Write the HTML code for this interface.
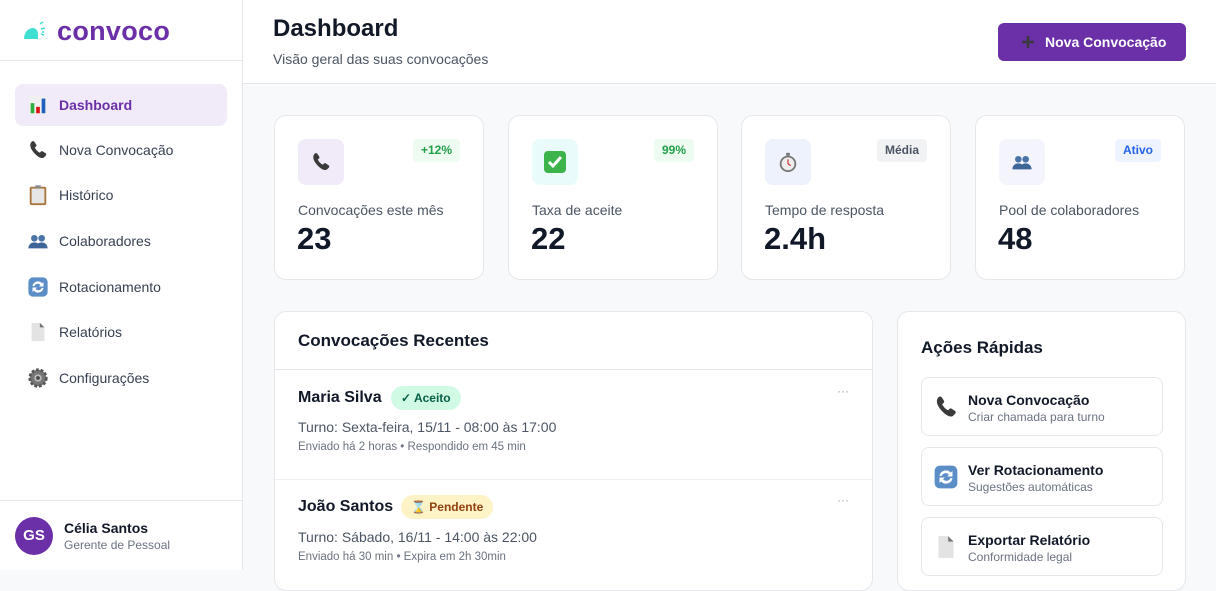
<!DOCTYPE html>
<html><head><meta charset="utf-8"><style>
*{box-sizing:border-box;margin:0;padding:0}
body{width:1216px;height:570px;overflow:hidden;font-family:"Liberation Sans",sans-serif;background:#f8f9fb;color:#111827;position:relative}
.abs{position:absolute}
.side{left:0;top:0;width:243px;height:570px;background:#fff;border-right:1px solid #e5e7eb}
.nav{position:absolute;left:15px;width:212px;height:42px;border-radius:8px;display:flex;align-items:center;padding-left:12px;font-size:14px;color:#374151}
.nav svg{width:22px;height:22px;margin-right:10px}
.nav.act{background:#f1eaf8;color:#6b2fa8;font-weight:bold}
.card{background:#fff;border:1px solid #e5e7eb;border-radius:12px;position:absolute}
.ic{position:absolute;left:23px;top:23px;width:46px;height:46px;border-radius:8px;display:flex;align-items:center;justify-content:center}
.badge{position:absolute;top:23px;right:23px;height:23px;padding:0 8px;border-radius:4px;font-size:12px;font-weight:bold;line-height:23px}
.lbl{position:absolute;left:23px;top:86px;font-size:14px;color:#4b5563}
.num{position:absolute;left:22px;top:105px;font-size:31px;font-weight:bold;color:#111827}
.qa{position:absolute;left:23px;width:242px;height:59px;border:1px solid #e5e7eb;border-radius:8px}
.qa svg{position:absolute;left:11px;top:16px;width:26px;height:26px}
.qa b{position:absolute;left:46px;top:14px;font-size:14px;color:#111827}
.qa span{position:absolute;left:46px;top:32px;font-size:12px;color:#6b7280}
</style></head><body>
<svg width="0" height="0" style="position:absolute"><defs>
<symbol id="phone" viewBox="0 0 24 24"><path d="M5 3c1-1 2-1 3 0l2 3c.6 1 .3 1.8-.5 2.5l-1 .8c1 2.5 3 4.5 5.5 5.7l.9-1c.7-.8 1.5-1 2.4-.4l3 2c1 .8 1 1.8 0 2.8l-1.3 1.3C17 22 13 20.5 9 16.5S2.5 8 4 4.5z" fill="#3a3a3a"/></symbol>
<symbol id="people" viewBox="0 0 24 24"><circle cx="8" cy="9" r="3.6" fill="#4a74a8"/><circle cx="16" cy="9" r="3.6" fill="#4a74a8"/><path d="M1.5 20c0-4 3-6.5 6.5-6.5s6.5 2.5 6.5 6.5z M9.5 20c0-4 3-6.5 6.5-6.5s6.5 2.5 6.5 6.5z" fill="#3d6598"/></symbol>
<symbol id="rot" viewBox="0 0 24 24"><rect x="1.5" y="1.5" width="21" height="21" rx="5" fill="#5b8ec7"/><path d="M6 11a6 6 0 0 1 10.5-3l1.5-1.5v5h-5l1.7-1.7A4 4 0 0 0 8 11z M18 13a6 6 0 0 1-10.5 3L6 17.5v-5h5l-1.7 1.7A4 4 0 0 0 16 13z" fill="#fff"/></symbol>
<symbol id="doc" viewBox="0 0 24 24"><path d="M5 2h9l5 5v15H5z" fill="#e3e3e3"/><path d="M14 2l5 5h-5z" fill="#777"/></symbol>
</defs></svg>

<div class="abs side">
  <div class="abs" style="left:23px;top:16px;display:flex;align-items:center">
    <svg width="30" height="24" viewBox="0 0 30 24"><path d="M1 19c0-6 4-11 9-11 3 0 5 3 5 6v5z" fill="#3fe0d2"/><path d="M17 4l3-2M18 9l4-1M18 14l3 1M19 12l2 0" stroke="#3fe0d2" stroke-width="1.5"/></svg>
    <span style="font-size:27px;font-weight:bold;color:#6b2fa8;margin-left:4px;letter-spacing:0.3px">convoco</span>
  </div>
  <div class="abs" style="left:0;top:60px;width:242px;border-top:1px solid #e5e7eb"></div>
  <div class="nav act" style="top:84px"><svg viewBox="0 0 24 24"><rect x="2" y="2" width="20" height="20" fill="#f0f0f0"/><rect x="4" y="10" width="4" height="11" fill="#2fae3b"/><rect x="10" y="14" width="4" height="7" fill="#d11"/><rect x="16" y="5" width="4" height="16" fill="#1f5fbf"/></svg>Dashboard</div>
  <div class="nav" style="top:129px"><svg><use href="#phone"/></svg>Nova Convocação</div>
  <div class="nav" style="top:174px"><svg viewBox="0 0 24 24"><rect x="3" y="3" width="18" height="20" rx="2" fill="#a8763e"/><rect x="5" y="5" width="14" height="16" fill="#e6e6e6"/><rect x="9" y="1.5" width="6" height="3" fill="#888"/></svg>Histórico</div>
  <div class="nav" style="top:220px"><svg><use href="#people"/></svg>Colaboradores</div>
  <div class="nav" style="top:266px"><svg><use href="#rot"/></svg>Rotacionamento</div>
  <div class="nav" style="top:311px"><svg><use href="#doc"/></svg>Relatórios</div>
  <div class="nav" style="top:357px"><svg viewBox="0 0 24 24"><circle cx="12" cy="12" r="9" fill="#777" stroke="#555" stroke-width="3" stroke-dasharray="3 2"/><circle cx="12" cy="12" r="4" fill="#bbb"/><circle cx="12" cy="12" r="2" fill="#444"/></svg>Configurações</div>
  <div class="abs" style="left:0;top:500px;width:242px;border-top:1px solid #e5e7eb"></div>
  <div class="abs" style="left:15px;top:517px;width:38px;height:38px;border-radius:50%;background:#6b2fa8;color:#fff;font-weight:bold;font-size:15px;text-align:center;line-height:38px">GS</div>
  <div class="abs" style="left:64px;top:520px;font-size:14px;font-weight:bold">Célia Santos</div>
  <div class="abs" style="left:64px;top:538px;font-size:12px;color:#6b7280">Gerente de Pessoal</div>
</div>

<div class="abs" style="left:243px;top:0;width:973px;height:84px;background:#fff;border-bottom:1px solid #e5e7eb"></div>
<div class="abs" style="left:273px;top:15px;font-size:24px;font-weight:bold">Dashboard</div>
<div class="abs" style="left:273px;top:51px;font-size:14px;color:#4b5563">Visão geral das suas convocações</div>
<div class="abs" style="left:998px;top:23px;width:188px;height:38px;background:#6b2fa8;border-radius:6px;color:#fff;font-weight:bold;font-size:14px;line-height:38px;padding-left:47px"><svg style="position:absolute;left:23px;top:12px" width="14" height="14" viewBox="0 0 14 14"><path d="M7 1v12M1 7h12" stroke="#3a3a3a" stroke-width="2.6"/></svg>Nova Convocação</div>

<div class="card" style="left:274px;top:115px;width:210px;height:165px">
 <div class="ic" style="background:#f1eaf8"><svg width="22" height="22"><use href="#phone"/></svg></div>
 <div class="badge" style="background:#edfbf1;color:#22a04a">+12%</div>
 <div class="lbl">Convocações este mês</div><div class="num">23</div></div>
<div class="card" style="left:508px;top:115px;width:210px;height:165px">
 <div class="ic" style="background:#e9fbfa"><svg width="24" height="24" viewBox="0 0 24 24"><rect x="1" y="1" width="22" height="22" rx="4" fill="#3cb44b"/><path d="M6 12l4 4 8-9" stroke="#fff" stroke-width="3" fill="none"/></svg></div>
 <div class="badge" style="background:#edfbf1;color:#22a04a">99%</div>
 <div class="lbl">Taxa de aceite</div><div class="num">22</div></div>
<div class="card" style="left:741px;top:115px;width:210px;height:165px">
 <div class="ic" style="background:#eef2fd"><svg width="22" height="22" viewBox="0 0 24 24"><circle cx="12" cy="14" r="8" fill="#eee" stroke="#777" stroke-width="2"/><rect x="10" y="2" width="4" height="3" fill="#777"/><path d="M12 14V9M12 14l3 2" stroke="#c33" stroke-width="1.3"/></svg></div>
 <div class="badge" style="background:#f1f2f4;color:#4b5563">Média</div>
 <div class="lbl">Tempo de resposta</div><div class="num">2.4h</div></div>
<div class="card" style="left:975px;top:115px;width:210px;height:165px">
 <div class="ic" style="background:#f4f5fc"><svg width="22" height="22"><use href="#people"/></svg></div>
 <div class="badge" style="background:#eef4ff;color:#2563eb">Ativo</div>
 <div class="lbl">Pool de colaboradores</div><div class="num">48</div></div>

<div class="card" style="left:274px;top:311px;width:599px;height:280px">
 <div class="abs" style="left:23px;top:19px;font-size:17px;font-weight:bold">Convocações Recentes</div>
 <div class="abs" style="left:0;top:57px;width:597px;border-top:1px solid #e5e7eb"></div>
 <div class="abs" style="left:23px;top:77px;font-size:16px;font-weight:bold">Maria Silva</div>
 <div class="abs" style="left:116px;top:74px;height:24px;padding:0 10px;border-radius:12px;background:#d1fae5;color:#065f46;font-size:12px;font-weight:bold;line-height:24px">✓ Aceito</div>
 <div class="abs" style="left:562px;top:72px;color:#9ca3af;font-size:12px">···</div>
 <div class="abs" style="left:23px;top:107px;font-size:14px;color:#4b5563">Turno: Sexta-feira, 15/11 - 08:00 às 17:00</div>
 <div class="abs" style="left:23px;top:129px;font-size:11.5px;color:#6b7280">Enviado há 2 horas • Respondido em 45 min</div>
 <div class="abs" style="left:0;top:167px;width:597px;border-top:1px solid #eef0f2"></div>
 <div class="abs" style="left:23px;top:186px;font-size:16px;font-weight:bold">João Santos</div>
 <div class="abs" style="left:126px;top:183px;height:24px;padding:0 10px;border-radius:12px;background:#fef3c7;color:#92400e;font-size:12px;font-weight:bold;line-height:24px">⌛ Pendente</div>
 <div class="abs" style="left:562px;top:181px;color:#9ca3af;font-size:12px">···</div>
 <div class="abs" style="left:23px;top:217px;font-size:14px;color:#4b5563">Turno: Sábado, 16/11 - 14:00 às 22:00</div>
 <div class="abs" style="left:23px;top:239px;font-size:11.5px;color:#6b7280">Enviado há 30 min • Expira em 2h 30min</div>
</div>

<div class="card" style="left:897px;top:311px;width:289px;height:280px">
 <div class="abs" style="left:23px;top:26px;font-size:17px;font-weight:bold">Ações Rápidas</div>
 <div class="qa" style="top:65px"><svg><use href="#phone"/></svg><b>Nova Convocação</b><span>Criar chamada para turno</span></div>
 <div class="qa" style="top:135px"><svg><use href="#rot"/></svg><b>Ver Rotacionamento</b><span>Sugestões automáticas</span></div>
 <div class="qa" style="top:205px"><svg><use href="#doc"/></svg><b>Exportar Relatório</b><span>Conformidade legal</span></div>
</div>
</body></html>
